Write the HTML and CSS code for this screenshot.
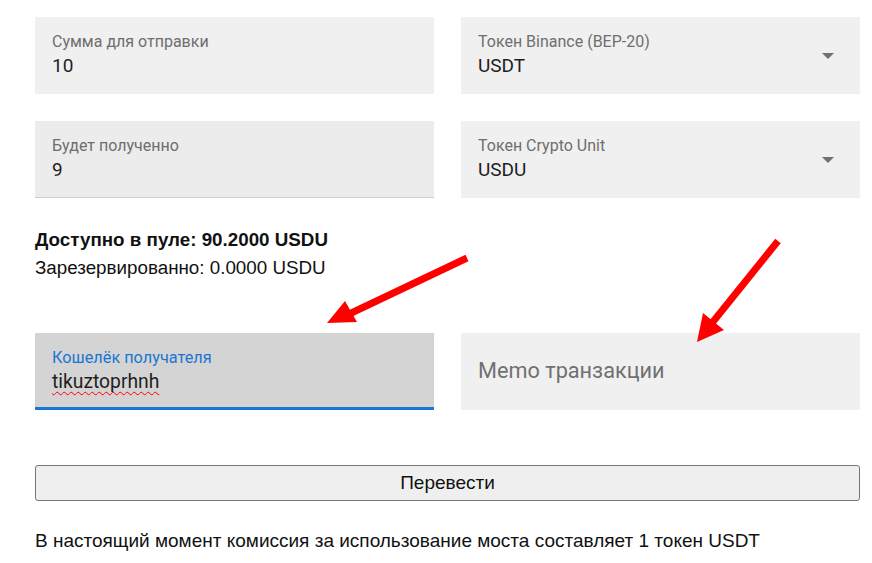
FILE: index.html
```html
<!DOCTYPE html>
<html lang="en">
<head>
    <meta charset="UTF-8">
    <meta name="viewport" content="width=device-width, initial-scale=1.0">
    <title>Мост</title>
    <link rel="stylesheet" href="styles.css">
</head>
<body>
    <div class="container">
        <div class="grid">
            <div class="field">
                <div class="field-text">
                    <div class="label">Сумма для отправки</div>
                    <div class="value">10</div>
                </div>
            </div>
            <div class="field">
                <div class="field-text">
                    <div class="label">Токен Binance (BEP-20)</div>
                    <div class="value">USDT</div>
                </div>
                <span class="caret"></span>
            </div>
            <div class="field readonly">
                <div class="field-text">
                    <div class="label">Будет полученно</div>
                    <div class="value">9</div>
                </div>
            </div>
            <div class="field">
                <div class="field-text">
                    <div class="label">Токен Crypto Unit</div>
                    <div class="value">USDU</div>
                </div>
                <span class="caret"></span>
            </div>
        </div>

        <div class="pool">
            <div class="pool-total">Доступно в пуле: 90.2000 USDU</div>
            <div class="pool-reserved">Зарезервированно: 0.0000 USDU</div>
        </div>

        <div class="grid">
            <div class="field focused">
                <div class="field-text">
                    <div class="label">Кошелёк получателя</div>
                    <div class="value misspelled">tikuztoprhnh</div>
                </div>
            </div>
            <div class="field">
                <div class="placeholder">Memo транзакции</div>
            </div>
        </div>

        <button class="send-btn">Перевести</button>

        <p class="note">В настоящий момент комиссия за использование моста составляет 1 токен USDT</p>
    </div>

    <!-- annotation arrows drawn over the form -->
    <svg class="arrows" width="872" height="563" viewBox="0 0 872 563">
        <line x1="467" y1="258" x2="345" y2="316" stroke="#ff0000" stroke-width="7"/>
        <polygon points="327,323 345,301 357,322" fill="#ff0000"/>
        <line x1="778" y1="241" x2="712" y2="323" stroke="#ff0000" stroke-width="7"/>
        <polygon points="697,342 703,313 724,330" fill="#ff0000"/>
    </svg>
</body>
</html>
```

FILE: styles.css
```css
body {
    margin: 0;
    font-family: Roboto, "Noto Sans", sans-serif;
    color: #1e1e1e;
    background-color: #fff;
}

.container {
    width: 825px;
    padding: 17px 0 0 35px;
}

.grid {
    display: grid;
    grid-template-columns: 399px 399px;
    column-gap: 27px;
    row-gap: 27px;
}

.field {
    display: flex;
    height: 77px;
    box-sizing: border-box;
    background-color: #f0f0f0;
}

.field.readonly {
    background-color: #ececec;
    border-bottom: 1px solid #cfcfcf;
}

.field.focused {
    background-color: #d4d4d4;
    border-bottom: 3px solid #1976d2;
}

.field-text {
    flex: 1;
    padding: 15px 0 0 17px;
}

.label {
    font-size: 16px;
    line-height: 20px;
    color: #6e6e6e;
}

.field.focused .label {
    font-size: 16.3px;
    color: #1976d2;
}

.value {
    margin-top: 2px;
    font-size: 19px;
    line-height: 24px;
    color: #1e1e1e;
}

.misspelled {
    font-size: 19.3px;
    text-decoration: underline wavy #ff0000;
    text-decoration-thickness: 1px;
    text-decoration-skip-ink: none;
    text-underline-offset: 3px;
}

.caret {
    width: 0;
    height: 0;
    margin: 36px 26px 0 0;
    border-left: 6.5px solid transparent;
    border-right: 6.5px solid transparent;
    border-top: 6.5px solid #707070;
}

.placeholder {
    padding: 24px 0 0 17px;
    font-size: 21.7px;
    line-height: 28px;
    color: #707070;
}

.pool {
    margin: 28px 0 51px;
    font-family: "Liberation Sans", Arial, sans-serif;
    font-size: 18.8px;
    line-height: 28px;
    color: #111;
}

.pool-total {
    font-weight: bold;
}

.send-btn {
    display: block;
    width: 825px;
    height: 36px;
    margin-top: 55px;
    padding: 0;
    font-family: "Liberation Sans", Arial, sans-serif;
    font-size: 19px;
    color: #111;
    background-color: #efefef;
    border: 1px solid #767676;
    border-radius: 3px;
}

.note {
    margin: 28px 0 0;
    font-family: "Liberation Sans", Arial, sans-serif;
    font-size: 19px;
    line-height: 24px;
    color: #111;
}

.arrows {
    position: absolute;
    top: 0;
    left: 0;
    pointer-events: none;
}
```
